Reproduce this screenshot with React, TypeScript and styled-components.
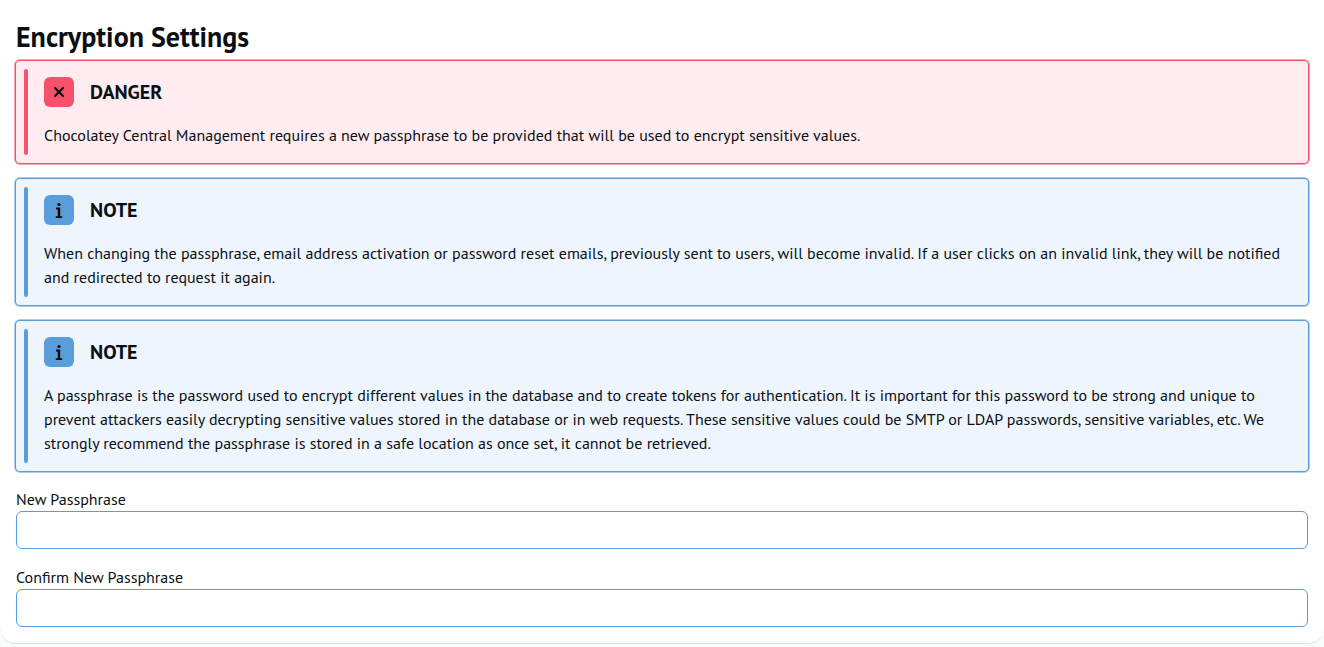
import React, { useId } from 'react';
import styled, { createGlobalStyle } from 'styled-components';

const GlobalStyle = createGlobalStyle`
  *, *::before, *::after { box-sizing: border-box; }
  body {
    margin: 0;
    background: #f9fafc;
    color: #0a0f14;
    font-family: "PT Sans", "Noto Sans", sans-serif;
    font-size: 16px;
    line-height: 24px;
  }
`;

const tones = {
  danger: { main: '#f5516c', soft: '#f9a4b2', fill: '#feecf0' },
  note: { main: '#5a9ddb', soft: '#a9cdec', fill: '#eef5fc' },
};

type Tone = keyof typeof tones;

const Panel = styled.main`
  padding: 20px 16px 16px;
  background: #fff;
  border-bottom: 1px solid #dee2e6;
  border-radius: 0 0 16px 16px;
`;

const Title = styled.h1`
  margin: 0 0 7px;
  font-size: 28px;
  font-weight: 700;
  line-height: 34px;
`;

const CalloutBox = styled.section<{ $tone: Tone }>`
  display: flex;
  gap: 16px;
  margin-bottom: 16px;
  padding: 8px;
  border-radius: 4px;
  background: ${({ $tone }) => tones[$tone].fill};
  box-shadow:
    0 0 0 1px ${({ $tone }) => tones[$tone].main},
    0 0 0 2px ${({ $tone }) => tones[$tone].soft};
`;

const Bar = styled.div<{ $tone: Tone }>`
  flex: none;
  width: 4px;
  border-radius: 2px;
  background: ${({ $tone }) => tones[$tone].main};
`;

const CalloutContent = styled.div`
  flex: 1;
  min-width: 0;
  padding: 8px 8px 8px 0;
`;

const CalloutHeader = styled.header`
  display: flex;
  align-items: center;
  gap: 16px;
  margin-bottom: 16px;
`;

const IconBadge = styled.span<{ $tone: Tone }>`
  display: flex;
  align-items: center;
  justify-content: center;
  width: 30px;
  height: 30px;
  border-radius: 6px;
  background: ${({ $tone }) => tones[$tone].main};
`;

const CalloutTitle = styled.h2`
  margin: 0;
  font-size: 20px;
  font-weight: 700;
  line-height: 30px;
`;

const CalloutText = styled.p`
  margin: 0;
`;

const FieldGroup = styled.div`
  display: flex;
  flex-direction: column;

  & + & {
    margin-top: 16px;
  }
`;

const Label = styled.label`
  display: block;
`;

const Input = styled.input`
  width: 100%;
  height: 38px;
  padding: 6px 12px;
  border: 1px solid #5a9ddb;
  border-radius: 6px;
  background: #fff;
  color: inherit;
  font: inherit;
`;

function CrossIcon() {
  return (
    <svg width="30" height="30" viewBox="0 0 30 30" fill="none" stroke="#0a0a0f" strokeWidth="2" strokeLinecap="round" aria-hidden="true">
      <path d="M11 11 19 19M19 11 11 19" />
    </svg>
  );
}

function InfoIcon() {
  return (
    <svg width="30" height="30" viewBox="0 0 30 30" aria-hidden="true">
      <circle cx="15" cy="9.5" r="1.6" fill="#0a0a0f" />
      <path d="M12 12.6H16.2V21.2H18.2V23H11.8V21.2H13.8V14.4H12Z" fill="#0a0a0f" />
    </svg>
  );
}

function Callout({ tone, title, children }: { tone: Tone; title: string; children: React.ReactNode }) {
  return (
    <CalloutBox $tone={tone}>
      <Bar $tone={tone} />
      <CalloutContent>
        <CalloutHeader>
          <IconBadge $tone={tone}>{tone === 'danger' ? <CrossIcon /> : <InfoIcon />}</IconBadge>
          <CalloutTitle>{title}</CalloutTitle>
        </CalloutHeader>
        <CalloutText>{children}</CalloutText>
      </CalloutContent>
    </CalloutBox>
  );
}

function PassphraseField({ label }: { label: string }) {
  const id = useId();
  return (
    <FieldGroup>
      <Label htmlFor={id}>{label}</Label>
      <Input id={id} type="password" autoComplete="new-password" />
    </FieldGroup>
  );
}

export default function App() {
  return (
    <>
      <GlobalStyle />
      <Panel>
        <Title>Encryption Settings</Title>
        <Callout tone="danger" title="DANGER">
          Chocolatey Central Management requires a new passphrase to be provided that will be used to encrypt
          sensitive values.
        </Callout>
        <Callout tone="note" title="NOTE">
          When changing the passphrase, email address activation or password reset emails, previously sent to
          users, will become invalid. If a user clicks on an invalid link, they will be notified and redirected
          to request it again.
        </Callout>
        <Callout tone="note" title="NOTE">
          A passphrase is the password used to encrypt different values in the database and to create tokens for
          authentication. It is important for this password to be strong and unique to prevent attackers easily
          decrypting sensitive values stored in the database or in web requests. These sensitive values could be
          SMTP or LDAP passwords, sensitive variables, etc. We strongly recommend the passphrase is stored in a
          safe location as once set, it cannot be retrieved.
        </Callout>
        <PassphraseField label="New Passphrase" />
        <PassphraseField label="Confirm New Passphrase" />
      </Panel>
    </>
  );
}
